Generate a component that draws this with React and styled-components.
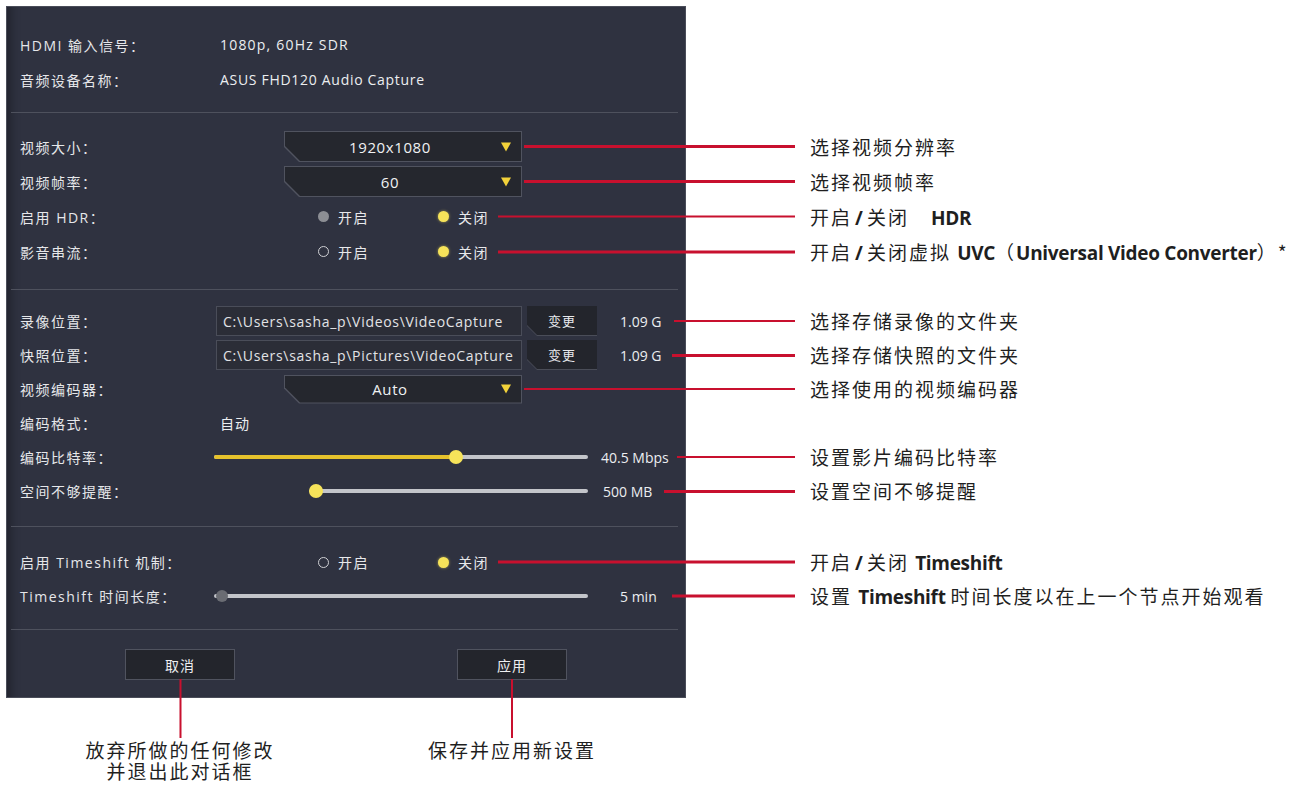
import React from 'react';
import styled, { createGlobalStyle } from 'styled-components';

const ROW_X = 11;
const LEADER_END = 795;
const RED = '#c8102e';

const Global = createGlobalStyle`
  html, body { margin: 0; padding: 0; background: #ffffff; }
  body { font-family: "Open Sans", "Noto Sans CJK SC", sans-serif; }
`;

const Page = styled.div`
  width: 1307px;
  height: 790px;
  padding: 6px;
  box-sizing: border-box;
  position: relative;
  overflow: hidden;
  background: #fff;
`;

const Panel = styled.div`
  width: 680px;
  height: 692px;
  box-sizing: border-box;
  background: #2f3240;
  border: 1px solid #4a4d59;
  box-shadow: inset 12px 0 10px -8px rgba(0, 0, 0, 0.3);
  display: flex;
  flex-direction: column;
  font-family: "Open Sans", "Noto Sans CJK SC", sans-serif;
  font-size: 14px;
  color: #e4e5e8;
`;

const Section = styled.div`
  margin: 0 7px 0 4px;
  padding: ${p => p.$top}px 0 ${p => p.$bottom}px;
  border-bottom: 1px solid #4e515d;
`;

const Row = styled.div`
  position: relative;
  display: flex;
  align-items: center;
  height: ${p => p.$h || 35}px;
  padding-left: 9px;
`;

const Label = styled.div`
  width: 200px;
  flex: none;
  letter-spacing: 1.5px;
  white-space: nowrap;
  color: #e6e7ea;
`;

const Value = styled.div`
  margin-left: ${p => p.$ml || 0}px;
  white-space: nowrap;
  color: #eceef0;
  letter-spacing: ${p => p.$ls || 0}px;
`;

const DropFrame = styled.div`
  margin-left: 64px;
  width: 238px;
  height: ${p => p.$h || 30}px;
  box-sizing: border-box;
  padding: 1px;
  background: #50535f;
  clip-path: polygon(0 0, 100% 0, 100% 100%, 15px 100%, 0 calc(100% - 15px));
`;

const DropInner = styled.div`
  position: relative;
  height: 100%;
  background: #25272e;
  clip-path: polygon(0 0, 100% 0, 100% 100%, 15px 100%, 0 calc(100% - 15px));
  display: flex;
  align-items: center;
  justify-content: center;
  padding-right: 26px;
  box-sizing: border-box;
  color: #f0f1f3;
  font-size: 15px;
  letter-spacing: 0.6px;
`;

const Caret = styled.span`
  position: absolute;
  right: 10px;
  top: 50%;
  transform: translateY(-50%);
  width: 0;
  height: 0;
  border-left: 5.5px solid transparent;
  border-right: 5.5px solid transparent;
  border-top: 9px solid #f2d23a;
`;

const RadioGroup = styled.div`
  margin-left: 98px;
  display: flex;
`;

const RadioOption = styled.div`
  width: 120px;
  display: flex;
  align-items: center;
  gap: 9px;
  letter-spacing: 1.5px;
  color: #e8e9ec;
`;

const Dot = styled.span`
  width: 11px;
  height: 11px;
  border-radius: 50%;
  box-sizing: border-box;
  flex: none;
  background: ${p => (p.$state === 'on' ? '#f6e35a' : p.$state === 'dim' ? '#8c8e94' : 'transparent')};
  border: ${p => (p.$state === 'empty' ? '1.5px solid #cfd0d4' : 'none')};
  box-shadow: ${p => (p.$state === 'on' ? '0 0 3px rgba(246,227,90,0.6)' : 'none')};
`;

const PathBox = styled.div`
  margin-left: -4px;
  width: 306px;
  height: 30px;
  box-sizing: border-box;
  border: 1px solid #4a4d59;
  background: #2b2d37;
  display: flex;
  align-items: center;
  padding-left: 6px;
  font-size: 14px;
  letter-spacing: 0.7px;
  color: #e2e3e6;
  white-space: nowrap;
  overflow: hidden;
`;

const ChangeBtn = styled.div`
  margin-left: 5px;
  width: 70px;
  height: 30px;
  box-sizing: border-box;
  padding: 0 0 1px 0;
  background: #4a4d58;
  clip-path: polygon(0 0, 100% 0, 100% 100%, 10px 100%, 0 calc(100% - 10px));
`;

const ChangeInner = styled.div`
  height: 100%;
  background: #23252c;
  clip-path: polygon(0 0, 100% 0, 100% 100%, 10px 100%, 0 calc(100% - 10px));
  display: flex;
  align-items: center;
  justify-content: center;
  font-size: 13px;
  letter-spacing: 1px;
  color: #e8e9ec;
`;

const Slider = styled.div`
  position: relative;
  margin-left: ${p => p.$ml}px;
  width: ${p => p.$w}px;
  height: 14px;
  flex: none;
`;

const Track = styled.div`
  position: absolute;
  left: 0;
  right: 0;
  top: 5px;
  height: 4px;
  border-radius: 2px;
  background: #c3c5ca;
`;

const Fill = styled.div`
  position: absolute;
  left: 0;
  top: 5px;
  height: 4px;
  border-radius: 2px;
  background: #e6c22c;
`;

const Knob = styled.div`
  position: absolute;
  top: 50%;
  width: ${p => p.$size}px;
  height: ${p => p.$size}px;
  border-radius: 50%;
  transform: translate(-50%, -50%);
  background: ${p => p.$color};
`;

const Footer = styled.div`
  display: flex;
  padding: 19px 0 0 118px;
  gap: 222px;
`;

const DialogButton = styled.div`
  position: relative;
  width: 110px;
  height: 31px;
  box-sizing: border-box;
  border: 1px solid #50535f;
  background: #23252c;
  display: flex;
  align-items: center;
  justify-content: center;
  font-size: 14px;
  letter-spacing: 1px;
  color: #eeeff1;
`;

const Callout = styled.div`
  position: absolute;
  top: 50%;
  left: ${p => p.$from - ROW_X}px;
  transform: translateY(-50%);
  display: flex;
  align-items: center;
  gap: 15px;
  pointer-events: none;
`;

const Leader = styled.div`
  width: ${p => LEADER_END - p.$from}px;
  height: ${p => p.$t}px;
  background: ${RED};
  flex: none;
`;

const Note = styled.div`
  white-space: nowrap;
  font-family: "Noto Sans CJK SC", "Noto Sans", sans-serif;
  font-size: 19px;
  letter-spacing: 2px;
  color: #1f1f1f;
  line-height: 22px;
`;

const B = styled.span`
  font-family: "Open Sans", "Noto Sans", sans-serif;
  font-weight: 700;
  letter-spacing: -0.3px;
  margin-left: ${p => p.$ml || 0}px;
  margin-right: ${p => p.$mr || 0}px;
`;

const Slash = styled.span`
  font-family: "Open Sans", sans-serif;
  font-weight: 700;
  letter-spacing: 0;
  margin: 0 4px 0 3px;
`;

const BtnNote = styled.div`
  position: absolute;
  top: 100%;
  left: 50%;
  transform: translateX(-50%);
  display: flex;
  flex-direction: column;
  align-items: center;
  pointer-events: none;
`;

const VLine = styled.div`
  width: 2px;
  height: 59px;
  background: ${RED};
`;

const BtnNoteText = styled(Note)`
  text-align: center;
  line-height: 21px;
  margin-top: 1px;
`;

function Mark({ from, t = 3, children }) {
  return (
    <Callout $from={from}>
      <Leader $from={from} $t={t} />
      <Note>{children}</Note>
    </Callout>
  );
}

function Dropdown({ value, h }) {
  return (
    <DropFrame $h={h}>
      <DropInner>
        {value}
        <Caret />
      </DropInner>
    </DropFrame>
  );
}

function Radios({ first }) {
  return (
    <RadioGroup>
      <RadioOption>
        <Dot $state={first} />
        开启
      </RadioOption>
      <RadioOption>
        <Dot $state="on" />
        关闭
      </RadioOption>
    </RadioGroup>
  );
}

function RangeSlider({ ml, w, pct, fill, knob, size = 14 }) {
  return (
    <Slider $ml={ml} $w={w}>
      <Track />
      {fill && <Fill style={{ width: `${pct}%` }} />}
      <Knob $size={size} $color={knob} style={{ left: `${pct}%` }} />
    </Slider>
  );
}

export default function App() {
  return (
    <Page>
      <Global />
      <Panel>
        <Section $top={20} $bottom={15}>
          <Row>
            <Label>HDMI 输入信号：</Label>
            <Value $ls={1.2}>1080p, 60Hz SDR</Value>
          </Row>
          <Row>
            <Label>音频设备名称：</Label>
            <Value $ls={0.7}>ASUS FHD120 Audio Capture</Value>
          </Row>
        </Section>

        <Section $top={16} $bottom={20}>
          <Row>
            <Label>视频大小：</Label>
            <Dropdown value="1920x1080" h={31} />
            <Mark from={524}>选择视频分辨率</Mark>
          </Row>
          <Row>
            <Label>视频帧率：</Label>
            <Dropdown value="60" h={31} />
            <Mark from={524}>选择视频帧率</Mark>
          </Row>
          <Row>
            <Label>启用 HDR：</Label>
            <Radios first="dim" />
            <Mark from={498} t={2}>
              开启<Slash>/</Slash>关闭<B $ml={22}>HDR</B>
            </Mark>
          </Row>
          <Row>
            <Label>影音串流：</Label>
            <Radios first="empty" />
            <Mark from={498}>
              开启<Slash>/</Slash>关闭虚拟 <B>UVC</B>（<B>Universal Video Converter</B>）*
            </Mark>
          </Row>
        </Section>

        <Section $top={14} $bottom={18}>
          <Row $h={34}>
            <Label>录像位置：</Label>
            <PathBox>C:\Users\sasha_p\Videos\VideoCapture</PathBox>
            <ChangeBtn>
              <ChangeInner>变更</ChangeInner>
            </ChangeBtn>
            <Value $ml={23}>1.09 G</Value>
            <Mark from={674} t={2}>选择存储录像的文件夹</Mark>
          </Row>
          <Row $h={34}>
            <Label>快照位置：</Label>
            <PathBox>C:\Users\sasha_p\Pictures\VideoCapture</PathBox>
            <ChangeBtn>
              <ChangeInner>变更</ChangeInner>
            </ChangeBtn>
            <Value $ml={23}>1.09 G</Value>
            <Mark from={672}>选择存储快照的文件夹</Mark>
          </Row>
          <Row $h={34}>
            <Label>视频编码器：</Label>
            <Dropdown value="Auto" h={29} />
            <Mark from={524} t={2}>选择使用的视频编码器</Mark>
          </Row>
          <Row $h={34}>
            <Label>编码格式：</Label>
            <Value $ls={1}>自动</Value>
          </Row>
          <Row $h={34}>
            <Label>编码比特率：</Label>
            <RangeSlider ml={-6} w={374} pct={64.7} fill knob="#f6e35a" />
            <Value $ml={13}>40.5 Mbps</Value>
            <Mark from={677} t={2}>设置影片编码比特率</Mark>
          </Row>
          <Row $h={34}>
            <Label>空间不够提醒：</Label>
            <RangeSlider ml={89} w={279} pct={2.5} knob="#f6e35a" />
            <Value $ml={15}>500 MB</Value>
            <Mark from={664}>设置空间不够提醒</Mark>
          </Row>
        </Section>

        <Section $top={18} $bottom={16}>
          <Row $h={34}>
            <Label>启用 Timeshift 机制：</Label>
            <Radios first="empty" />
            <Mark from={498}>
              开启<Slash>/</Slash>关闭 <B>Timeshift</B>
            </Mark>
          </Row>
          <Row $h={34}>
            <Label>Timeshift 时间长度：</Label>
            <RangeSlider ml={-6} w={374} pct={2.1} knob="#6a6c73" size={12} />
            <Value $ml={32}>5 min</Value>
            <Mark from={672}>
              设置 <B $mr={5}>Timeshift</B>时间长度以在上一个节点开始观看
            </Mark>
          </Row>
        </Section>

        <Footer>
          <DialogButton>
            取消
            <BtnNote>
              <VLine />
              <BtnNoteText>
                放弃所做的任何修改
                <br />
                并退出此对话框
              </BtnNoteText>
            </BtnNote>
          </DialogButton>
          <DialogButton>
            应用
            <BtnNote>
              <VLine />
              <BtnNoteText>保存并应用新设置</BtnNoteText>
            </BtnNote>
          </DialogButton>
        </Footer>
      </Panel>
    </Page>
  );
}
